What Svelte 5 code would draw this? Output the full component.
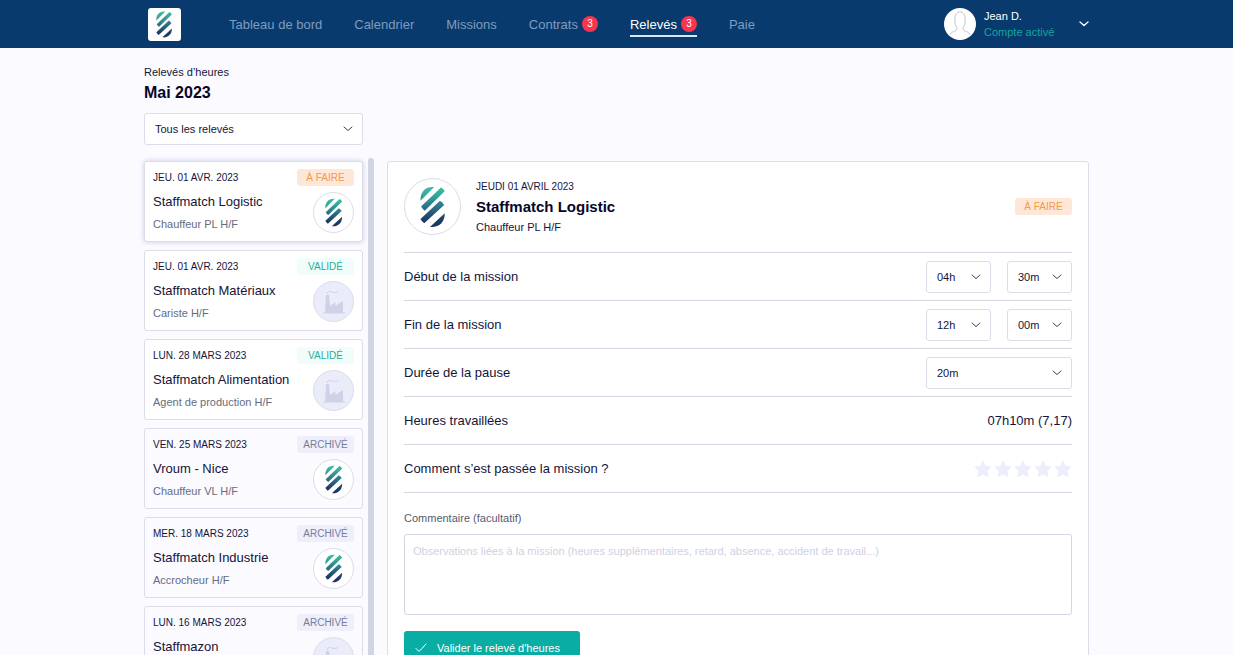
<script lang="ts">
  interface Timesheet {
    date: string;
    company: string;
    job: string;
    status: "todo" | "valid" | "archived";
    logo: boolean;
  }

  const statusLabels = { todo: "À FAIRE", valid: "VALIDÉ", archived: "ARCHIVÉ" };

  const navItems = [
    { label: "Tableau de bord", count: 0 },
    { label: "Calendrier", count: 0 },
    { label: "Missions", count: 0 },
    { label: "Contrats", count: 3 },
    { label: "Relevés", count: 3 },
    { label: "Paie", count: 0 },
  ];

  const timesheets: Timesheet[] = [
    { date: "JEU. 01 AVR. 2023", company: "Staffmatch Logistic", job: "Chauffeur PL H/F", status: "todo", logo: true },
    { date: "JEU. 01 AVR. 2023", company: "Staffmatch Matériaux", job: "Cariste H/F", status: "valid", logo: false },
    { date: "LUN. 28 MARS 2023", company: "Staffmatch Alimentation", job: "Agent de production H/F", status: "valid", logo: false },
    { date: "VEN. 25 MARS 2023", company: "Vroum - Nice", job: "Chauffeur VL H/F", status: "archived", logo: true },
    { date: "MER. 18 MARS 2023", company: "Staffmatch Industrie", job: "Accrocheur H/F", status: "archived", logo: true },
    { date: "LUN. 16 MARS 2023", company: "Staffmazon", job: "", status: "archived", logo: false },
  ];

  let activeNav = $state("Relevés");
  let selected = $state(0);
  let rating = $state(0);
  let comment = $state("");
</script>

{#snippet brand()}
  <svg class="brand" viewBox="0 0 48 80" aria-hidden="true">
    <defs>
      <linearGradient id="brand-fill" gradientUnits="userSpaceOnUse" x1="0" y1="0" x2="0" y2="80">
        <stop offset="0" stop-color="#3fc0a6" />
        <stop offset="0.2" stop-color="#38a99b" />
        <stop offset="0.6" stop-color="#2a5f80" />
        <stop offset="0.8" stop-color="#1d3c66" />
        <stop offset="1" stop-color="#1a3560" />
      </linearGradient>
    </defs>
    <g fill="url(#brand-fill)">
      <path d="M1 28 C0 12 10 0 27 2 Z" />
      <path d="M40 3 Q45 5 47 10 L9 47 Q5 44 2 39 Z" />
      <path d="M38 28 Q43 31 46 36 L8 71 Q3 68 1 63 Z" />
      <path d="M47 52 C48 68 36 80 19 78 Z" />
    </g>
  </svg>
{/snippet}

{#snippet factory()}
  <svg class="factory" viewBox="0 0 24 26" aria-hidden="true">
    <path d="M4 6 H7 L8 17 L13.500 13 V17 L20 12.500 L21 13 V24 H3 Z" fill="#cfd2e6" />
    <path d="M1 24 H23" stroke="#cfd2e6" stroke-width="1" />
    <path d="M5.500 5 C5 2 8 2.500 10 3 C13 4 16 3.500 16 1.500" fill="none" stroke="#cfd2e6" stroke-width="1" />
  </svg>
{/snippet}

{#snippet badge(status: Timesheet["status"])}
  <span class="status {status}">{statusLabels[status]}</span>
{/snippet}

{#snippet picker(id: string, label: string, value: string)}
  <div class="select">
    <select {id} aria-label={label}><option>{value}</option></select>
    <svg class="chevron" viewBox="0 0 10 6" aria-hidden="true"><path d="M1 1 L5 4.500 L9 1" /></svg>
  </div>
{/snippet}

<div class="page">
  <header>
    <div class="container topbar">
      <a href="#accueil" class="home" aria-label="Accueil">{@render brand()}</a>
      <nav>
        {#each navItems as item}
          <a href="#{item.label}" class:active={activeNav === item.label} onclick={() => (activeNav = item.label)}>
            {item.label}
            {#if item.count}<span class="count">{item.count}</span>{/if}
          </a>
        {/each}
      </nav>
      <button class="account">
        <svg class="avatar" viewBox="0 0 32 32" aria-hidden="true">
          <circle cx="16" cy="16" r="16" fill="#fff" />
          <path
            d="M6 27 C7 23 12 24 13 21 C13.500 19 11 18 11 15 V11 C11 6 13 4 16 4 S21 6 21 11 V15 C21 18 18.500 19 19 21 C20 24 25 23 26 27"
            fill="none"
            stroke="#c3c5cf"
          />
        </svg>
        <span class="who">
          <span>Jean D.</span>
          <span class="state">Compte activé</span>
        </span>
        <svg class="chevron" viewBox="0 0 10 6" aria-hidden="true"><path d="M1 1 L5 4.500 L9 1" /></svg>
      </button>
    </div>
  </header>

  <main class="container">
    <p class="over">Relevés d’heures</p>
    <h1>Mai 2023</h1>
    <div class="select filter">
      <select aria-label="Filtrer les relevés">
        <option>Tous les relevés</option>
        <option>À faire</option>
        <option>Validés</option>
      </select>
      <svg class="chevron" viewBox="0 0 10 6" aria-hidden="true"><path d="M1 1 L5 4.500 L9 1" /></svg>
    </div>

    <div class="columns">
      <div class="list">
        {#each timesheets as sheet, i}
          <button class="card" class:selected={selected === i} class:muted={sheet.status === "archived"} onclick={() => (selected = i)}>
            <span class="texts">
              <span class="date">{sheet.date}</span>
              <span class="company">{sheet.company}</span>
              <span class="job">{sheet.job}</span>
            </span>
            <span class="side">
              {@render badge(sheet.status)}
              <span class="round" class:empty={!sheet.logo}>
                {#if sheet.logo}{@render brand()}{:else}{@render factory()}{/if}
              </span>
            </span>
          </button>
        {/each}
      </div>
      <div class="scrollbar"></div>

      <section class="detail">
        <div class="intro">
          <span class="round big">{@render brand()}</span>
          <div class="heading">
            <p class="day">JEUDI 01 AVRIL 2023</p>
            <h2>Staffmatch Logistic</h2>
            <p class="role">Chauffeur PL H/F</p>
          </div>
          {@render badge("todo")}
        </div>

        <div class="row">
          <label for="start-hour">Début de la mission</label>
          <div class="fields">
            {@render picker("start-hour", "Heure de début", "04h")}
            {@render picker("start-minute", "Minute de début", "30m")}
          </div>
        </div>
        <div class="row">
          <label for="end-hour">Fin de la mission</label>
          <div class="fields">
            {@render picker("end-hour", "Heure de fin", "12h")}
            {@render picker("end-minute", "Minute de fin", "00m")}
          </div>
        </div>
        <div class="row">
          <label for="pause">Durée de la pause</label>
          <div class="fields">
            {@render picker("pause", "Durée de la pause", "20m")}
          </div>
        </div>
        <div class="row">
          <span>Heures travaillées</span>
          <span>07h10m (7,17)</span>
        </div>
        <div class="row">
          <span>Comment s’est passée la mission ?</span>
          <div class="stars">
            {#each [1, 2, 3, 4, 5] as star}
              <button class:on={star <= rating} aria-label="{star} sur 5" onclick={() => (rating = star)}>
                <svg viewBox="0 0 24 24" aria-hidden="true">
                  <path d="M12 2 L15 8.600 L22 9.400 L16.800 14.200 L18.200 21.500 L12 18 L5.800 21.500 L7.200 14.200 L2 9.400 L9 8.600 Z" />
                </svg>
              </button>
            {/each}
          </div>
        </div>

        <label class="comment" for="comment">Commentaire (facultatif)</label>
        <textarea
          id="comment"
          bind:value={comment}
          placeholder="Observations liées à la mission (heures supplémentaires, retard, absence, accident de travail...)"
        ></textarea>
        <button class="submit">
          <svg viewBox="0 0 12 10" aria-hidden="true"><path d="M1 5.500 L4 8.500 L11 1" /></svg>
          Valider le relevé d'heures
        </button>
      </section>
    </div>
  </main>
</div>

<style>
  :global(body) {
    background: #fbfaff;
  }

  .page {
    height: 100vh;
    overflow: hidden;
    font-family: "Liberation Sans", Arial, sans-serif;
    color: #14143a;
    font-size: 13px;
  }
  .page * {
    box-sizing: border-box;
  }
  button,
  select,
  textarea {
    font: inherit;
    color: inherit;
  }
  button {
    border: 0;
    padding: 0;
    background: none;
    cursor: pointer;
  }
  p,
  h1,
  h2 {
    margin: 0;
  }

  .container {
    width: 100%;
    max-width: 945px;
    margin: 0 auto;
  }

  /* Top bar */
  header {
    background: #083a6e;
  }
  .topbar {
    display: flex;
    align-items: center;
    height: 48px;
  }
  .home {
    display: flex;
    align-items: center;
    justify-content: center;
    width: 33px;
    height: 33px;
    margin-left: 4px;
    border-radius: 3px;
    background: #fff;
  }
  .home .brand {
    height: 27px;
  }
  nav {
    display: flex;
    gap: 32px;
    margin-left: 48px;
  }
  nav a {
    display: flex;
    align-items: center;
    gap: 4px;
    height: 26px;
    border-bottom: 2px solid transparent;
    padding-top: 2px;
    color: #7e9dbf;
    text-decoration: none;
  }
  nav a.active {
    color: #fff;
    border-color: #d5e8fb;
  }
  .count {
    width: 16px;
    border-radius: 8px;
    background: #f9344e;
    color: #fff;
    font-size: 10px;
    line-height: 16px;
    text-align: center;
  }
  .account {
    display: flex;
    align-items: center;
    margin-left: auto;
    color: #fff;
    text-align: left;
  }
  .avatar {
    width: 32px;
    height: 32px;
    margin-right: 8px;
  }
  .who {
    display: flex;
    flex-direction: column;
    width: 95px;
    font-size: 11px;
    line-height: 16px;
  }
  .state {
    color: #12a79d;
  }

  .chevron {
    width: 10px;
    height: 6px;
    fill: none;
    stroke: currentColor;
    stroke-linecap: round;
    stroke-linejoin: round;
  }
  .account .chevron {
    stroke-width: 1.4;
  }

  /* Page heading and filter */
  .over {
    padding-top: 16px;
    font-size: 11px;
    line-height: 17px;
  }
  h1 {
    font-size: 16px;
    line-height: 24px;
    color: #060629;
  }
  .select {
    display: grid;
    flex: 1;
    align-items: center;
  }
  .select > * {
    grid-area: 1 / 1;
  }
  .select .chevron {
    justify-self: end;
    margin-right: 10px;
    color: #3e3e5c;
    pointer-events: none;
  }
  select {
    appearance: none;
    width: 100%;
    height: 32px;
    padding: 0 10px;
    border: 1px solid #dcdcea;
    border-radius: 3px;
    background: #fff;
    font-size: 11px;
  }
  .filter {
    width: 219px;
    margin-top: 8px;
  }

  /* Timesheet list */
  .columns {
    display: flex;
    align-items: flex-start;
    margin-top: 13px;
  }
  .list {
    display: flex;
    flex: none;
    flex-direction: column;
    gap: 8px;
    width: 219px;
    padding-top: 3px;
  }
  .scrollbar {
    flex: none;
    align-self: stretch;
    width: 6px;
    margin: 0 13px 0 5px;
    border-radius: 3px 3px 0 0;
    background: #d2d4e2;
  }
  .card {
    display: flex;
    justify-content: space-between;
    height: 81px;
    padding: 7px 8px;
    border: 1px solid #dcdcea;
    border-radius: 3px;
    background: #fff;
    text-align: left;
  }
  .card.muted {
    background: #fbfaff;
  }
  .card.selected {
    box-shadow: 0 0 5px #c9c9e4;
  }
  .texts {
    display: flex;
    flex-direction: column;
    white-space: nowrap;
  }
  .date {
    font-size: 10px;
    line-height: 17px;
  }
  .company {
    padding-top: 5px;
    line-height: 22px;
  }
  .job {
    padding-top: 3px;
    font-size: 11px;
    line-height: 16px;
    color: #666c80;
  }
  .side {
    display: flex;
    flex: none;
    flex-direction: column;
    align-items: flex-end;
    gap: 6px;
  }
  .status {
    width: 57px;
    border-radius: 3px;
    font-size: 10px;
    line-height: 17px;
    text-align: center;
  }
  .todo {
    background: #ffe7d8;
    color: #f2994f;
  }
  .valid {
    background: #f1fdfb;
    color: #2aae96;
  }
  .archived {
    background: #eeeffb;
    color: #777d98;
  }
  .round {
    display: flex;
    flex: none;
    align-items: center;
    justify-content: center;
    width: 41px;
    height: 41px;
    border: 1px solid #dcdcea;
    border-radius: 50%;
    background: #fff;
  }
  .round.empty {
    background: #ebecfa;
  }
  .round .brand {
    height: 29px;
  }
  .factory {
    width: 24px;
    height: 26px;
  }

  /* Timesheet detail */
  .detail {
    flex: 1;
    margin-top: 3px;
    padding: 16px;
    border: 1px solid #dcdcea;
    border-radius: 3px;
    background: #fff;
  }
  .intro {
    display: flex;
    align-items: center;
    padding-bottom: 17px;
  }
  .round.big {
    width: 57px;
    height: 57px;
    margin-right: 15px;
  }
  .big .brand {
    height: 42px;
  }
  .heading {
    flex: 1;
  }
  .day {
    font-size: 10px;
    line-height: 16px;
  }
  h2 {
    font-size: 15px;
    line-height: 24px;
    color: #060629;
  }
  .role {
    font-size: 11px;
    line-height: 16px;
  }
  .row {
    display: flex;
    align-items: center;
    justify-content: space-between;
    height: 48px;
    border-top: 1px solid #d5d6e2;
  }
  .fields {
    display: flex;
    gap: 16px;
    width: 146px;
  }
  .stars {
    display: flex;
    gap: 2px;
  }
  .stars button,
  .stars svg {
    display: block;
    width: 18px;
    height: 18px;
  }
  .stars svg {
    fill: #edeefc;
    stroke: #edeefc;
    stroke-width: 2;
    stroke-linejoin: round;
  }
  .stars .on svg {
    fill: #f2b84f;
    stroke: #f2b84f;
  }
  .comment {
    display: block;
    padding: 17px 0 8px;
    border-top: 1px solid #d5d6e2;
    font-size: 11px;
    line-height: 16px;
    color: #555b70;
  }
  textarea {
    display: block;
    width: 100%;
    height: 81px;
    padding: 8px;
    border: 1px solid #d5d6e2;
    border-radius: 3px;
    resize: none;
    font-size: 11px;
    line-height: 16px;
  }
  textarea::placeholder {
    color: #d0d1e2;
  }
  .submit {
    display: flex;
    align-items: center;
    gap: 10px;
    height: 33px;
    margin-top: 16px;
    padding: 0 20px 0 11px;
    border-radius: 3px;
    background: #0aada3;
    color: #fff;
    font-size: 11px;
  }
  .submit svg {
    width: 12px;
    height: 10px;
    fill: none;
    stroke: #fff;
    stroke-linecap: round;
    stroke-linejoin: round;
  }
</style>
